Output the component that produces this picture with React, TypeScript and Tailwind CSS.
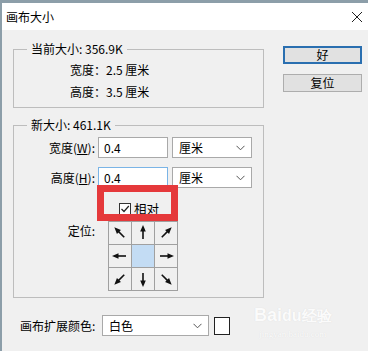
import React from 'react';

const font = "font-['Noto_Sans_CJK_SC','Microsoft_YaHei',sans-serif]";

// anchor grid: rotation of each arrow, null = selected center
const anchors: (number | null)[] = [-45, 0, 45, -90, null, 90, -135, 180, 135];

function Arrow({ deg }: { deg: number }) {
  return (
    <svg width="22" height="22" viewBox="0 0 22 22">
      <g transform={`rotate(${deg} 11 11)`}>
        <line x1="11" y1="17" x2="11" y2="8" stroke="#111" strokeWidth="1.6" />
        <polygon points="11,3 8.2,9.5 13.8,9.5" fill="#111" />
      </g>
    </svg>
  );
}

function Chevron() {
  return (
    <svg width="9" height="6" viewBox="0 0 9 6" className="shrink-0">
      <path d="M0.5 0.8 L4.5 4.8 L8.5 0.8" fill="none" stroke="#555" strokeWidth="1" />
    </svg>
  );
}

function Select({ value, w }: { value: string; w: string }) {
  return (
    <div className={`${w} h-[21px] bg-white border border-[#a9a9a9] flex items-center justify-between pl-[6px] pr-[6px]`}>
      <span className="text-[12px] leading-none text-black">{value}</span>
      <Chevron />
    </div>
  );
}

function Group({ title, className, children }: { title: string; className: string; children: React.ReactNode }) {
  return (
    <div className={`relative w-[251px] border border-[#bdbdbd] ${className}`}>
      <span className="absolute left-[13px] top-[-9px] px-[4px] bg-[#f0f0f0] text-[12px] leading-[16px] text-black">
        {title}
      </span>
      {children}
    </div>
  );
}

export default function App() {
  return (
    <div className={`${font} w-[368px] h-[351px] bg-[#f0f0f0] border-t-[3px] border-l-[2px] border-[#8c9ea9] relative overflow-hidden text-black`}>
      {/* title bar */}
      <div className="h-[27px] bg-white flex items-center justify-between pl-[4px] pr-[5px]">
        <span className="text-[12px]">画布大小</span>
        <svg width="12" height="12" viewBox="0 0 12 12">
          <path d="M1 1 L11 11 M11 1 L1 11" stroke="#222" strokeWidth="1" />
        </svg>
      </div>

      <div className="flex">
        <div className="w-[262px] pl-[11px]">
          <Group title="当前大小: 356.9K" className="mt-[19px] h-[59px]">
            <div className="pl-[56px] pt-[9px] text-[12px] leading-[22px]">
              <div>宽度：2.5 厘米</div>
              <div>高度：3.5 厘米</div>
            </div>
          </Group>

          <Group title="新大小: 461.1K" className="mt-[17px] h-[173px]">
            <div className="pt-[11px] flex flex-col text-[12px]">
              <div className="flex items-center h-[21px]">
                <span className="w-[84px] text-right pr-[3px]">
                  宽度(<span className="underline">W</span>):
                </span>
                <div className="w-[70px] h-[21px] bg-white border border-[#a9a9a9] flex items-center pl-[5px]">0.4</div>
                <div className="ml-[4px]">
                  <Select value="厘米" w="w-[80px]" />
                </div>
              </div>
              <div className="flex items-center h-[21px] mt-[9px]">
                <span className="w-[84px] text-right pr-[3px]">
                  高度(<span className="underline">H</span>):
                </span>
                <div className="w-[70px] h-[21px] bg-white border border-[#7ab4e6] flex items-center pl-[5px]">0.4</div>
                <div className="ml-[4px]">
                  <Select value="厘米" w="w-[80px]" />
                </div>
              </div>

              {/* checkbox row with red annotation frame */}
              <div className="relative flex items-center h-[20px] mt-[11px] pl-[105px]">
                <div className="absolute left-[83px] top-[-14px] w-[81px] h-[36px] border-[7px] border-[#e5393b]" />
                <div className="w-[12px] h-[12px] border border-[#333] bg-white flex items-center justify-center">
                  <svg width="10" height="10" viewBox="0 0 10 10">
                    <path d="M1.5 5 L4 7.5 L8.8 2" fill="none" stroke="#222" strokeWidth="1.2" />
                  </svg>
                </div>
                <span className="ml-[3px] text-[12.5px]">相对</span>
              </div>

              <div className="flex mt-[2px]">
                <span className="w-[84px] text-right pr-[3px] pt-[1px]">定位:</span>
                <div className="ml-[10px] grid grid-cols-[repeat(3,23px)] grid-rows-[repeat(3,23px)] border-t border-l border-[#a0a0a0]">
                  {anchors.map((deg, i) => (
                    <div
                      key={i}
                      className={`border-r border-b border-[#a0a0a0] flex items-center justify-center ${deg === null ? 'bg-[#c3dcf4]' : 'bg-[#f0f0f0]'}`}
                    >
                      {deg !== null && <Arrow deg={deg} />}
                    </div>
                  ))}
                </div>
              </div>
            </div>
          </Group>

          <div className="flex items-center mt-[17px] pl-[7px] text-[12px]">
            <span className="w-[78px]">画布扩展颜色:</span>
            <div className="ml-[4px]">
              <Select value="白色" w="w-[107px]" />
            </div>
            <div className="ml-[5px] w-[16px] h-[18px] bg-white border border-[#222]" />
          </div>
        </div>

        <div className="ml-[19px] flex flex-col text-[12px]">
          <button className="mt-[16px] w-[79px] h-[18px] bg-[#e1e1e1] border-2 border-[#2a6fb0] flex items-center justify-center leading-none">
            好
          </button>
          <button className="mt-[10px] w-[79px] h-[18px] bg-[#e1e1e1] border border-[#adadad] flex items-center justify-center leading-none">
            复位
          </button>
        </div>
      </div>

      {/* baidu watermark */}
      <div className="absolute left-[252px] top-[300px] flex flex-col items-center text-[#fbfbfb] [text-shadow:0_0_1px_#d8d8d8] pointer-events-none">
        <span className="text-[18px] font-bold font-['Liberation_Sans',sans-serif] leading-[24px]">
          Bai<span className="text-[16px]">du</span>
          <span className="text-[15px]">经验</span>
        </span>
        <span className="text-[9px] leading-[12px] font-['Liberation_Serif',serif]">jingyan.baidu.com</span>
      </div>
    </div>
  );
}
